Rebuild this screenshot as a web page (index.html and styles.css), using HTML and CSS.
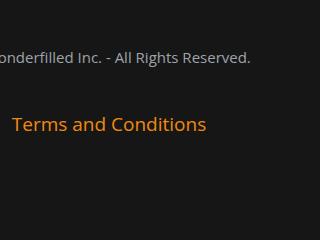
FILE: index.html
```html
<!DOCTYPE html>
<html>
<head>
<meta charset="utf-8">
<link rel="stylesheet" href="styles.css">
</head>
<body>
<footer class="footer">
  <p class="copy">© 2023 Wonderfilled Inc. - All Rights Reserved.</p>
  <a class="terms" href="#">Terms and Conditions</a>
</footer>
</body>
</html>
```
FILE: styles.css
```css
html, body {
  margin: 0;
  padding: 0;
  background: #161616;
  height: 100%;
  overflow: hidden;
}
.footer {
  width: 218px;
  display: flex;
  flex-direction: column;
  align-items: center;
  padding-top: 47px;
  font-family: "Open Sans", "Noto Sans", sans-serif;
}
.copy {
  margin: 0 38px 0 0;
  white-space: nowrap;
  font-size: 15px;
  line-height: 20px;
  color: #9ea3aa;
}
.terms {
  margin-top: 44px;
  white-space: nowrap;
  font-size: 19px;
  line-height: 26px;
  color: #f08a0f;
  text-decoration: none;
}
```
